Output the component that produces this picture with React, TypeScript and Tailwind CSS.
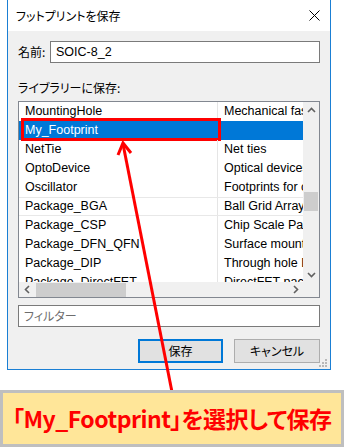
import React from 'react';

type Row = { name: string; desc: string; selected?: boolean; lined?: boolean };

const ROWS: Row[] = [
  { name: 'MountingHole', desc: 'Mechanical fasteners' },
  { name: 'My_Footprint', desc: '', selected: true },
  { name: 'NetTie', desc: 'Net ties' },
  { name: 'OptoDevice', desc: 'Optical devices' },
  { name: 'Oscillator', desc: 'Footprints for crystal oscillators' },
  { name: 'Package_BGA', desc: 'Ball Grid Array packages', lined: true },
  { name: 'Package_CSP', desc: 'Chip Scale Package' },
  { name: 'Package_DFN_QFN', desc: 'Surface mount DFN and QFN' },
  { name: 'Package_DIP', desc: 'Through hole DIP packages' },
  { name: 'Package_DirectFET', desc: 'DirectFET packages' },
];

const Chevron = ({ dir }: { dir: 'up' | 'down' | 'left' | 'right' }) => {
  const pts = {
    up: '1,6 4.5,2.5 8,6',
    down: '1,3 4.5,6.5 8,3',
    left: '6,1 2.5,4.5 6,8',
    right: '3,1 6.5,4.5 3,8',
  }[dir];
  return (
    <svg width="9" height="9" viewBox="0 0 9 9">
      <polyline points={pts} fill="none" stroke="#606060" strokeWidth="1.6" />
    </svg>
  );
};

export default function App() {
  return (
    <div className="relative w-[344px] h-[447px] bg-white overflow-hidden font-['Liberation_Sans','Noto_Sans_CJK_JP',sans-serif] [font-feature-settings:'palt'] text-black">
      {/* dialog */}
      <div className="relative ml-[7px] w-[324px] h-[370px] flex flex-col border-x border-b border-[#1a7fd4]">
        <div className="h-[31px] bg-white flex items-center justify-between pl-[8px] pr-[10px]">
          <span className="text-[12px] font-['Noto_Sans_CJK_JP',sans-serif]">フットプリントを保存</span>
          <svg width="11" height="11" viewBox="0 0 11 11">
            <path d="M0.5 0.5 L10.5 10.5 M10.5 0.5 L0.5 10.5" stroke="#000" strokeWidth="1" />
          </svg>
        </div>

        <div className="flex-1 bg-[#f0f0f0] pl-[10px] pr-[10px] pt-[10px] flex flex-col">
          <div className="flex items-center h-[22px]">
            <span className="w-[32px] text-[12px] font-['Noto_Sans_CJK_JP',sans-serif]">名前:</span>
            <div className="flex-1 h-[22px] bg-white border border-[#7a7a7a] flex items-center pl-[5px] text-[12.5px]">
              SOIC-8_2
            </div>
          </div>

          <div className="mt-[17px] h-[16px] flex items-center text-[12px] font-['Noto_Sans_CJK_JP',sans-serif]">
            ライブラリーに保存:
          </div>

          <div className="mt-[5px] w-[302px] h-[197px] border border-[#828790] bg-white flex flex-col">
            <div className="flex h-[180px]">
              <div className="w-[284px] overflow-hidden text-[12.5px]">
                {ROWS.map((r) => (
                  <div
                    key={r.name}
                    className={`relative flex h-[19px] items-center whitespace-nowrap ${r.selected ? 'bg-[#0078d7] text-white' : ''} ${r.lined ? 'border-y border-[#e8e8e8]' : ''}`}
                  >
                    <div className={`w-[199px] h-full flex items-center pl-[6px] ${r.selected ? '' : 'border-r border-[#e5e5e5]'}`}>
                      {r.name}
                    </div>
                    <div className="flex-1 h-full flex items-center pl-[6px] overflow-hidden">{r.desc}</div>
                    {r.selected && (
                      <div className="absolute left-[2px] top-[-3px] w-[200px] h-[23px] border-[3px] border-[#ff0000]" />
                    )}
                  </div>
                ))}
              </div>
              <div className="w-[16px] bg-[#f0f0f0] flex flex-col">
                <div className="h-[16px] flex items-center justify-center">
                  <Chevron dir="up" />
                </div>
                <div className="flex-1">
                  <div className="mt-[74px] mx-[1px] h-[19px] bg-[#cdcdcd]" />
                </div>
                <div className="h-[16px] flex items-center justify-center">
                  <Chevron dir="down" />
                </div>
              </div>
            </div>
            <div className="flex h-[15px] bg-[#f0f0f0]">
              <div className="w-[16px] flex items-center justify-center">
                <Chevron dir="left" />
              </div>
              <div className="flex-1 flex items-center">
                <div className="ml-[1px] w-[90px] h-[14px] bg-[#cdcdcd]" />
              </div>
              <div className="w-[16px] flex items-center justify-center">
                <Chevron dir="right" />
              </div>
              <div className="w-[16px]" />
            </div>
          </div>

          <div className="mt-[7px] w-[302px] h-[22px] bg-white border border-[#7a7a7a] flex items-center pl-[5px] text-[12px] text-[#6d6d6d] font-['Noto_Sans_CJK_JP',sans-serif]">
            フィルター
          </div>

          <div className="mt-[12px] flex justify-end gap-[11px] text-[12px] font-['Noto_Sans_CJK_JP',sans-serif]">
            <div className="w-[85px] h-[24px] bg-[#e1e1e1] border-2 border-[#0078d7] flex items-center justify-center">
              保存
            </div>
            <div className="w-[86px] h-[24px] bg-[#e1e1e1] border border-[#adadad] flex items-center justify-center">
              キャンセル
            </div>
          </div>
        </div>

        {/* resize grip */}
        <svg className="absolute right-[3px] bottom-[2px]" width="8" height="8" viewBox="0 0 8 8">
          <rect x="6" y="0" width="2" height="2" fill="#b8b8b8" />
          <rect x="3" y="3" width="2" height="2" fill="#b8b8b8" />
          <rect x="6" y="3" width="2" height="2" fill="#b8b8b8" />
          <rect x="0" y="6" width="2" height="2" fill="#b8b8b8" />
          <rect x="3" y="6" width="2" height="2" fill="#b8b8b8" />
          <rect x="6" y="6" width="2" height="2" fill="#b8b8b8" />
        </svg>
      </div>

      {/* annotation arrow */}
      <svg className="absolute left-0 top-0 pointer-events-none" width="344" height="447" viewBox="0 0 344 447">
        <line x1="172" y1="392" x2="123" y2="144" stroke="#ff0000" strokeWidth="3" />
        <polyline points="118,155 123,143 131,153" fill="none" stroke="#ff0000" strokeWidth="3" />
      </svg>

      {/* callout */}
      <div className="absolute left-0 top-[390px] w-[344px] h-[57px] bg-[#ffe699] border-[3px] border-[#bfbfbf] flex items-center justify-center">
        <span className="text-[23px] font-bold text-[#ff0000] whitespace-nowrap font-['Noto_Sans_CJK_JP',sans-serif] [font-feature-settings:'normal'] tracking-[-0.5px]">
          「My_Footprint」を選択して保存
        </span>
      </div>
    </div>
  );
}
